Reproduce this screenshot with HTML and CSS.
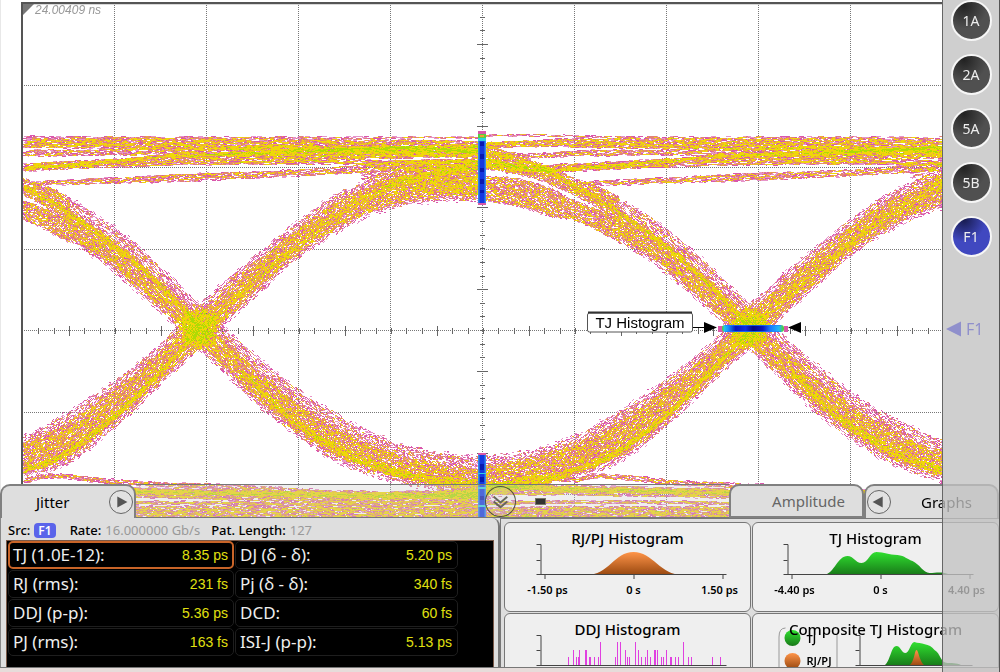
FILE: index.html
```html
<!DOCTYPE html>
<html lang="en">
<head>
<meta charset="utf-8">
<title>Jitter analysis</title>
<link rel="stylesheet" href="styles.css">
</head>
<body>
<main class="scope">
  <section class="plot" aria-label="Eye diagram">
    <svg class="layer" viewBox="0 0 942 518">
      <g class="grid-v">
        <path d="M114.500 5V518M206.500 5V518M298.500 5V518M390.500 5V518M482.500 5V518M574.500 5V518M666.500 5V518M758.500 5V518M850.500 5V518"/>
        <path d="M24 85.500H942M24 167.500H942M24 249.500H942M24 330.500H942M24 412.500H942M24 494.500H942"/>
      </g>
      <g id="ticks" class="ticks"></g>
    </svg>
    <canvas class="layer" id="eye" width="942" height="518"></canvas>
    <svg class="layer" viewBox="0 0 942 518">
      <defs>
        <linearGradient id="vhist" x1="0" x2="1" y1="0" y2="0">
          <stop offset="0" stop-color="#38a0ee"/><stop offset=".3" stop-color="#1438e0"/><stop offset=".7" stop-color="#1438e0"/><stop offset="1" stop-color="#38a0ee"/>
        </linearGradient>
        <linearGradient id="hhist" x1="0" x2="1" y1="0" y2="0">
          <stop offset="0" stop-color="#58d020"/><stop offset=".04" stop-color="#20c8e8"/><stop offset=".1" stop-color="#1890ff"/><stop offset=".22" stop-color="#0818b8"/><stop offset=".38" stop-color="#1030e0"/><stop offset=".5" stop-color="#040880"/><stop offset=".66" stop-color="#0818c0"/><stop offset=".78" stop-color="#1878ff"/><stop offset=".92" stop-color="#20b8f8"/><stop offset="1" stop-color="#58d020"/>
        </linearGradient>
      </defs>
      <path fill="#555" d="M21 2H942V4H23V518H21z"/>
      <path fill="#d8d8d8" d="M23 4H942V5H23z"/>
      <path fill="#777" d="M23 4H34L23 15z"/>
      <text class="delay" x="35" y="14">24.00409 ns</text>
      <path fill="#d858a8" d="M478 131h8v3h-8zM478 203h8v2h-8z"/>
      <path fill="#58d040" d="M478 134h8v4h-8z"/>
      <path fill="#f0a030" d="M480 135h4v2h-4z"/>
      <path fill="url(#vhist)" d="M478 141h8v62h-8zM478 455h8v63h-8z"/>
      <path fill="#30d0e0" d="M478 138h8v3h-8zM478 473h8v1h-8zM478 487h8v2h-8zM478 505h8v2h-8z"/>
      <path fill="#0818b0" d="M480 142h4v4h-4zM480 154h4v5h-4zM480 168h4v4h-4zM480 179h4v5h-4zM480 190h4v3h-4zM480 464h4v6h-4zM480 477h4v5h-4zM480 496h4v4h-4z"/>
      <path fill="#d858a8" d="M478 453h8v2h-8zM718 326h5v6h-5zM784 326h4v6h-4z"/>
      <rect x="722" y="325" width="62" height="7" rx="3" fill="url(#hhist)"/>
      <path stroke="#2080ff" stroke-opacity=".7" d="M725 325.500H781M725 331.500H781"/>
      <path stroke="#000" d="M692 327.500H706"/>
      <path d="M704 322L717 327.500L704 333zM801 322L788 327.500L801 333z"/>
      <rect x="587.500" y="313" width="105" height="19" rx="2" fill="#fff" stroke="#555"/>
      <path stroke="#333" stroke-width="2" d="M588 312.500H692"/>
      <text class="marker-label" x="640" y="328">TJ Histogram</text>
    </svg>
  </section>

  <div class="tabs">
    <div class="tab tab-jitter"><span>Jitter</span>
      <button class="round" aria-label="Next"><svg viewBox="0 0 24 24"><path d="M8 6L19 12L8 18z"/></svg></button>
    </div>
    <div class="strip">
      <button class="collapse" aria-label="Collapse"><svg viewBox="0 0 30 30"><path d="M8 10L15 16L22 10M8 15L15 21L22 15"/></svg></button>
      <i class="grip"></i>
    </div>
    <button class="tab tab-amp">Amplitude</button>
    <div class="tab tab-graphs">
      <button class="round" aria-label="Previous"><svg viewBox="0 0 24 24"><path d="M16 6L5 12L16 18z"/></svg></button>
      <span>Graphs</span>
    </div>
  </div>

  <div class="dock">
    <section class="jitter">
      <p class="info"><b>Src:</b><span class="chip">F1</span><b>Rate:</b><span class="dim">16.000000 Gb/s</span><b>Pat. Length:</b><span class="dim">127</span></p>
      <dl class="values">
        <div class="cell selected"><dt>TJ (1.0E-12):</dt><dd>8.35 ps</dd></div>
        <div class="cell"><dt>DJ (δ - δ):</dt><dd>5.20 ps</dd></div>
        <div class="cell"><dt>RJ (rms):</dt><dd>231 fs</dd></div>
        <div class="cell"><dt>Pj (δ - δ):</dt><dd>340 fs</dd></div>
        <div class="cell"><dt>DDJ (p-p):</dt><dd>5.36 ps</dd></div>
        <div class="cell"><dt>DCD:</dt><dd>60 fs</dd></div>
        <div class="cell"><dt>PJ (rms):</dt><dd>163 fs</dd></div>
        <div class="cell"><dt>ISI-J (p-p):</dt><dd>5.13 ps</dd></div>
      </dl>
    </section>
    <section class="graphs">
      <article class="graph"><h2>RJ/PJ Histogram</h2>
        <svg viewBox="1 1 244 88">
          <defs><linearGradient id="or" x1="0" x2="0" y1="0" y2="1"><stop offset="0" stop-color="#ff9448"/><stop offset="1" stop-color="#984810"/></linearGradient></defs>
          <path fill="url(#or)" d="M82 53C104 53 110 30 129 30S156 53 178 53z"/>
          <path class="axis" d="M32 22.500H36.500V53M32 38.500H36M32 52.500H222M40.500 53v4M129.500 53v4M218.500 53v4"/>
          <text x="43" y="72">-1.50 ps</text><text x="129" y="72">0 s</text><text x="215" y="72">1.50 ps</text>
        </svg>
      </article>
      <article class="graph"><h2>TJ Histogram</h2>
        <svg viewBox="1 1 244 88">
          <defs><linearGradient id="gr" x1="0" x2="0" y1="0" y2="1"><stop offset="0" stop-color="#30e030"/><stop offset="1" stop-color="#187818"/></linearGradient></defs>
          <path fill="url(#gr)" d="M72 53C82 51 85 34 95 34C101 34 103 41 109 41C116 41 117 30 124 30C132 30 136 33 145 33C153 34 154 37 160 39C167 42 171 51 177 51C184 51 189 49 198 53z"/>
          <path class="axis" d="M31 22.500H35.500V53M31 38.500H35M31 52.500H221M39.500 53v4M128.500 53v4M217.500 53v4"/>
          <text x="42" y="72">-4.40 ps</text><text x="128" y="72">0 s</text><text x="214" y="72">4.40 ps</text>
        </svg>
      </article>
      <article class="graph"><h2>DDJ Histogram</h2>
        <svg viewBox="1 1 244 88">
          <path stroke="#e040e0" fill="none" d="M64 52v-8M69 52v-15M72 52v-8M74 52v-8M75 52v-15M81 52v-15M82 52v-15M85 52v-8M86 52v-8M90 52v-8M94 52v-8M96 52v-23M111 52v-8M113 52v-23M116 52v-23M121 52v-15M123 52v-8M125 52v-8M131 52v-23M134 52v-15M137 52v-8M141 52v-8M143 52v-15M146 52v-8M150 52v-15M151 52v-15M153 52v-15M157 52v-8M159 52v-8M162 52v-15M166 52v-8M167 52v-8M171 52v-8M174 52v-8M179 52v-23M184 52v-8M187 52v-8M208 52v-8M216 52v-8"/>
          <path class="axis" d="M32 22.500H36.500V53M32 37.500H36M32 52.500H222"/>
        </svg>
      </article>
      <article class="graph"><h2>Composite TJ Histogram</h2>
        <svg viewBox="1 1 244 88">
          <path fill="none" stroke="#999" d="M33 15Q26.500 15 26.500 24V60M84.500 22V60"/>
          <circle cx="40" cy="25" r="8" fill="url(#gr)"/><circle cx="40" cy="48" r="8" fill="url(#or)"/>
          <text class="key" x="54" y="30">TJ</text><text class="key" x="54" y="52">RJ/PJ</text>
          <path fill="url(#gr)" d="M131 53C138 50 138 33 144 33C148 33 149 40 153 40C157 40 158 29 162 29C168 31 177 30 182 37C188 40 188 50 195 50C201 50 206 50 210 53z"/>
          <path fill="url(#or)" d="M156 53C162 50 162 37 164 37S167 50 173 53z"/>
          <path class="axis" d="M103 22.500H107.500V53M103 37.500H107M103 52.500H220"/>
        </svg>
      </article>
    </section>
    <div class="foot"></div>
  </div>

  <nav class="rail" aria-label="Channels">
    <button>1A</button><button>2A</button><button>5A</button><button>5B</button><button class="on">F1</button>
    <p class="level"><svg viewBox="0 0 16 16"><path d="M0 8L16 0V16z"/></svg>F1</p>
  </nav>
</main>
<script src="eye.js"></script>
</body>
</html>
```
FILE: styles.css
```css
* { box-sizing: border-box; }
body { margin: 0; font-family: "Noto Sans", sans-serif; font-size: 14px; color: #000; background: #fff; }
button { font: inherit; padding: 0; margin: 0; cursor: pointer; }
h2, p, dl, dd { margin: 0; }

.scope { display: grid; grid-template-columns: 1fr 58px; grid-template-rows: 1fr 34px 154px; height: 100vh; overflow: hidden; }
.plot { grid-area: 1 / 1 / 3 / 2; display: grid; min-height: 0; box-shadow: inset 1px 0 #e8e8e8; }
.layer { grid-area: 1 / 1; width: 100%; height: 100%; min-height: 0; }
.grid-v { fill: none; stroke: #777; stroke-dasharray: 1 1; }
.ticks { fill: none; stroke: #666; }
.delay { font: italic 12px "Liberation Sans", sans-serif; fill: #999; }
.marker-label { font: 15px "Liberation Sans", sans-serif; text-anchor: middle; }

.tabs { grid-area: 2 / 1 / 3 / 3; display: grid; grid-template-columns: 136px 1fr 135px 136px; z-index: 1; }
.tab { display: flex; align-items: center; background: #dedede; border: 2px solid #808080; border-bottom: 0; border-radius: 10px 10px 0 0; }
.tab-jitter { justify-content: space-between; padding: 0 1px 0 34px; font-size: 15px; }
.tab-amp { justify-content: flex-end; padding-right: 17px; font-size: 15px; color: #666; border-bottom: 2px solid #808080; }
.tab-graphs { gap: 30px; padding-left: 1px; font-size: 15px; margin-right: 1px; }
.round { width: 24px; height: 24px; border: 1px solid #666; border-radius: 50%; background: #e2e2e2; display: grid; }
.round path { fill: #555; }
.strip { display: flex; align-items: center; gap: 19px; padding-left: 349px; background: rgba(205, 205, 205, .32); border-top: 1px solid #777; border-bottom: 1px solid #777; }
.collapse { width: 31px; height: 31px; border: 1px solid rgba(70, 70, 50, .9); border-radius: 50%; background: rgba(200, 200, 200, .2); display: grid; }
.collapse path { fill: none; stroke: #66665a; stroke-width: 2; }
.grip { width: 11px; height: 7px; background: #333; border: 1px solid #776; }

.dock { grid-area: 3 / 1 / 4 / 3; display: grid; grid-template-columns: 1fr 1fr; grid-template-rows: 1fr 5px; min-height: 0; background: #dedede; z-index: 1; }
.foot { grid-column: 1 / 3; background: #e6dcda; border-top: 1px solid #777; }
.jitter { display: flex; flex-direction: column; min-height: 0; padding: 0 4px 0 5px; border-right: 2px solid #777; border-left: 1px solid #888; border-radius: 0 8px 0 0; }
.info { display: flex; align-items: center; height: 22px; padding: 2px 0 0 2px; font-size: 13px; white-space: nowrap; }
.info b { font-weight: 500; margin-right: 4px; }
.chip { background: #5a64ea; color: #fff; font-size: 12px; font-weight: 600; line-height: 15px; padding: 0 4px; border-radius: 4px; margin-right: 14px; }
.dim { color: #999; margin-right: 11px; }
.values { flex: 1; background: #000; border: 1px solid #7a5a4a; border-bottom: 0; display: grid; grid-template-columns: 226px 223px; grid-auto-rows: 28px; gap: 1px; align-content: start; padding-left: 1px; }
.cell { display: flex; align-items: center; justify-content: space-between; padding: 0 5px 0 4px; border: 1px solid #1e1e1e; border-radius: 5px; color: #eee; font-size: 17px; line-height: 20px; }
.cell dd { color: #e0e010; font: 14px "Liberation Sans", sans-serif; }
.selected { border: 2px solid #c86428; padding: 0 4px 0 3px; }

.graphs { display: grid; grid-template-columns: 1fr 1fr; grid-template-rows: 90px 90px; gap: 1px; min-height: 0; overflow: hidden; padding: 3px 1px 0 3px; border-top: 1px solid #777; border-left: 1px solid #777; }
.graph { display: grid; background: #efefef; border: 1px solid #777; border-radius: 6px; min-width: 0; }
.graph h2 { grid-area: 1 / 1; z-index: 1; font-size: 15px; line-height: 30px; font-weight: 500; text-align: center; white-space: nowrap; }
.graph svg { grid-area: 1 / 1; width: 100%; height: 88px; }
.graph text { font-size: 11px; font-weight: 600; text-anchor: middle; }
.graph .key { text-anchor: start; }
.axis { fill: none; stroke: #444; }

.rail { grid-area: 1 / 2 / 4 / 3; z-index: 2; display: flex; flex-direction: column; align-items: center; gap: 13px; background: rgba(193, 193, 193, .776); border-left: 1px solid #666; border-right: 1px solid #555; }
.rail button { width: 41px; height: 41px; flex: none; border: 2px solid #f6f6f6; border-radius: 50%; background: radial-gradient(circle at 30% 10%, #222, #505050 55%); color: #eee; font-size: 14px; }
.rail .on { background: radial-gradient(circle at 30% 5%, #181c50, #4048c0 50%); }
.level { display: flex; align-items: center; align-self: flex-start; gap: 5px; margin-top: 47px; padding-left: 3px; font-size: 16px; line-height: 24px; color: #9090cc; }
.level svg { width: 15px; height: 16px; fill: currentColor; }
```
FILE: eye.js
```js
const W = 942, H = 518, PERIOD = 550;

// Graticule ticks
let d = "";
for (let k = -29; k <= 29; k++) {
  const x = Math.round(483 + k * 92 / 6) + 0.5;
  const long = Math.abs(k) % 6 === 3;
  if (x > 24 && x < W) d += `M${x} ${long ? 326 : 328}V${long ? 336 : 334}`;
  const y = Math.round(330 + k * 81.75 / 6) + 0.5;
  if (y > 6 && y < H) d += `M${long ? 477 : 480} ${y}H${long ? 488 : 485}`;
}
document.getElementById("ticks").innerHTML = `<path d="${d}"/>`;

let seed = 7;
const rnd = () => {
  seed = (seed * 1664525 + 1013904223) >>> 0;
  return seed / 4294967296;
};
const gauss = () => rnd() + rnd() + rnd() - 1.5;
const hits = new Float32Array(W * H);

// Piecewise cubic interpolation through rows of [x, top, bottom]
function at(pts, x, col) {
  let i = 0;
  while (i < pts.length - 2 && pts[i + 1][0] < x) i++;
  const a = pts[Math.max(0, i - 1)], b = pts[i], c = pts[i + 1], e = pts[Math.min(pts.length - 1, i + 2)];
  const h = c[0] - b[0], t = (x - b[0]) / h;
  const m0 = (c[col] - a[col]) / (c[0] - a[0]) * h;
  const m1 = (e[col] - b[col]) / (e[0] - b[0]) * h;
  return (2 * t ** 3 - 3 * t * t + 1) * b[col] + (t ** 3 - 2 * t * t + t) * m0 +
    (3 * t * t - 2 * t ** 3) * c[col] + (t ** 3 - t * t) * m1;
}

// density: hits per pixel; run: length of each streak; soft: blur of the edges
function band(pts, density, run, soft) {
  const x0 = pts[0][0], x1 = pts[pts.length - 1][0];
  for (let shift = 0; shift <= PERIOD; shift += PERIOD) {
    for (let x = x0; x < x1; x++) {
      const px = x + shift;
      if (px < 23 || px >= W) continue;
      const top = at(pts, x, 1), bot = at(pts, x, 2);
      const n = density * (bot - top) / run;
      const count = Math.floor(n) + (rnd() < n % 1 ? 1 : 0);
      for (let j = 0; j < count; j++) {
        const off = rnd() * (bot - top) + gauss() * soft;
        const w = rnd() < 0.5 ? 1 : 0.7;
        for (let s = 0; s < run; s++) {
          if (px + s >= W || x + s > x1) break;
          const y = Math.round(at(pts, x + s, 1) + off);
          if (y >= 5 && y < H) hits[y * W + px + s] += w;
        }
      }
    }
  }
}
const line = (pts, width, density, run) => band(pts.map(p => [p[0], p[1] - width / 2, p[1] + width / 2]), density, run, 1);

const falling = [[68, 198, 241], [100, 217, 261], [133, 242, 288], [167, 273, 318], [200, 305, 350], [240, 342, 388], [267, 365, 413], [300, 391, 438], [340, 416, 463], [390, 440, 480], [430, 451, 488], [482, 457, 500]];
const rising = [[-68, 457, 500], [-20, 450, 488], [22, 436, 476], [50, 422, 470], [83, 402, 453], [133, 366, 410], [167, 336, 377], [200, 303, 348], [233, 274, 316], [267, 245, 285], [300, 219, 256], [333, 196, 234], [367, 180, 216], [400, 168, 206], [440, 162, 201], [482, 160, 200]];
const inner = (pts, a, b) => pts.map(p => [p[0], p[1] + (p[2] - p[1]) * a, p[1] + (p[2] - p[1]) * b]);

band(falling, 1, 2, 3);
band(inner(falling, 0.3, 0.88), 1.4, 2, 2);
band([[-68, 150, 168], [-33, 156, 174], [-10, 163, 180], [22, 177, 194], [50, 187, 209], [69, 197, 222]], 2, 2, 1);
band([[-68, 176, 200], [-33, 178, 206], [0, 188, 216], [22, 199, 219], [50, 210, 232], [69, 220, 242]], 2, 2, 1);
line([[-68, 150], [-30, 161], [0, 172], [30, 189], [60, 207], [100, 235], [150, 276], [199, 326]], 6, 1.8, 3);

band(rising, 1, 2, 2.6);
band(inner(rising, 0.2, 0.88), 1.3, 2, 2);
line([[-20, 486], [22, 471], [60, 456], [100, 427], [135, 397], [199, 330]], 6, 2.4, 3);
line([[199, 330], [240, 293], [290, 251], [340, 213], [390, 186], [430, 174], [482, 164]], 8, 1.2, 3);
line([[240, 370], [290, 418], [330, 444], [380, 467], [430, 479], [482, 483]], 8, 1.8, 3);
band([[182, 314, 342], [199, 309, 348], [216, 314, 342]], 1.8, 1, 3);

// High level
band([[-68, 134, 136], [0, 134, 136], [22, 135, 137], [100, 136, 138], [482, 136, 138]], 1.4, 5, 0.4);
band([[-68, 142, 148], [0, 139, 146], [22, 138, 147], [250, 138, 150], [400, 139, 152], [482, 141, 152]], 2.3, 4, 0.6);
band([[-68, 143, 149], [-30, 153, 157], [22, 150, 156], [100, 149, 155], [250, 147, 156], [400, 148, 156], [482, 150, 158]], 1.7, 4, 0.7);
band([[-68, 158, 168], [-20, 165, 171], [22, 163, 171], [80, 160, 168], [160, 156, 163], [250, 152, 162], [400, 146, 158], [482, 144, 156]], 2.2, 4, 0.7);
band([[100, 166, 168], [180, 163, 165], [300, 160, 164], [400, 160, 165], [482, 160, 166]], 2, 6, 0.4);
band([[32, 182, 183], [50, 180, 185], [115, 177, 183], [190, 173, 181], [250, 171, 178], [330, 167, 174], [400, 160, 170], [482, 158, 170]], 1.7, 4, 0.5);
band([[360, 170, 180], [400, 166, 190], [482, 165, 196]], 0.8, 4, 1);
line([[-68, 143], [-20, 143], [22, 143], [160, 145], [300, 147], [482, 148]], 3, 0.8, 6);
line([[-68, 156], [-30, 168], [0, 170], [22, 168], [90, 163], [180, 155], [300, 151], [400, 147], [482, 151]], 3, 2.6, 6);

// Low level
band([[-68, 486, 496], [-10, 474, 480], [22, 477, 482], [50, 473, 478], [130, 480, 485], [250, 485, 490], [340, 490, 494], [482, 490, 500]], 1.7, 4, 0.7);
band([[-68, 482, 494], [22, 485, 495], [130, 487, 497], [300, 491, 501], [400, 492, 502], [482, 488, 502]], 2.4, 5, 0.8);
band([[-68, 500, 505], [22, 500, 503], [250, 501, 505], [482, 501, 507]], 2.2, 5, 0.6);
band([[-68, 507, 520], [22, 506, 520], [482, 506, 520]], 2.6, 4, 1);
line([[-68, 484], [-20, 487], [22, 489], [130, 491], [300, 494], [400, 496], [482, 494]], 4, 3.4, 6);

const ctx = document.getElementById("eye").getContext("2d");
const img = ctx.createImageData(W, H);
const ramp = [[1, 216, 84, 170], [1.8, 224, 128, 116], [2.6, 238, 172, 48], [6, 240, 214, 4], [99, 172, 218, 0]];
for (let i = 0; i < hits.length; i++) {
  const v = hits[i];
  if (!v) continue;
  const c = ramp.find(r => v <= r[0]);
  img.data.set([c[1], c[2], c[3], v < 0.8 ? 160 : 250], i * 4);
}
ctx.putImageData(img, 0, 0);
```
